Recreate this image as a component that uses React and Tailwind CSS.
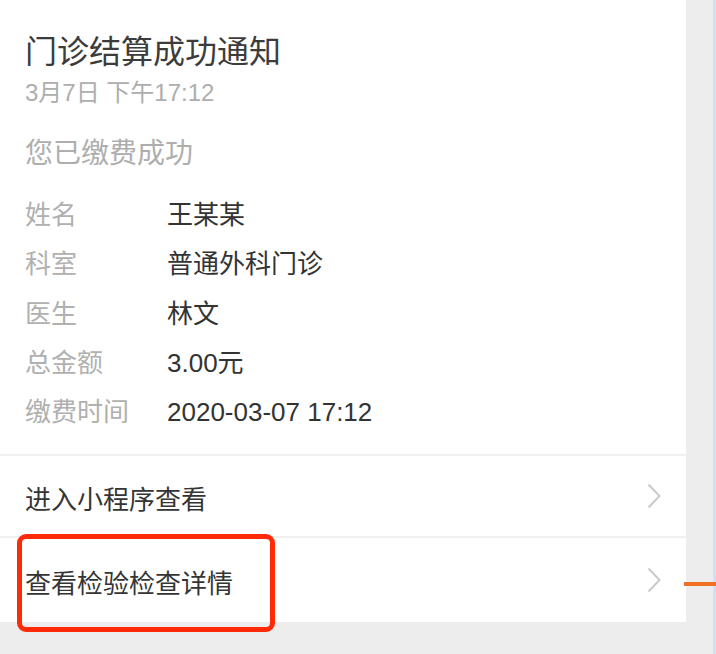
const FONT = { fontFamily: '"Liberation Sans", "Noto Sans CJK SC", sans-serif' };

const info = [
  ['姓名', '王某某'],
  ['科室', '普通外科门诊'],
  ['医生', '林文'],
  ['总金额', '3.00元'],
  ['缴费时间', '2020-03-07 17:12'],
];

function Chevron() {
  return (
    <svg width="14" height="26" viewBox="0 0 14 26" fill="none" className="shrink-0">
      <polyline points="1.5,1.5 12.5,13 1.5,24.5" stroke="#cacaca" strokeWidth="2" />
    </svg>
  );
}

function LinkRow({ label, h }) {
  return (
    <div className={`flex items-center justify-between pl-[25px] pr-[25px] ${h}`}>
      <span className="pt-[8px] text-[26px] leading-[34px] text-[#353535]">{label}</span>
      <Chevron />
    </div>
  );
}

export default function App() {
  return (
    <div className="relative flex h-[654px] w-[716px] overflow-hidden bg-[#ededed]" style={FONT}>
      <div className="flex h-[622px] w-[686px] flex-col bg-white">
        <div className="px-[25px] pt-[30px]">
          <div className="text-[32px] leading-[44px] text-[#3c3c3c]">门诊结算成功通知</div>
          <div className="mt-[4px] text-[24px] leading-[30px] text-[#aeaeae]">3月7日 下午17:12</div>
          <div className="mt-[28px] text-[28px] leading-[36px] text-[#aeaeae]">您已缴费成功</div>
          <div className="mt-[19px] flex flex-col">
            {info.map(([k, v]) => (
              <div key={k} className="flex h-[49.25px] items-center text-[26px]">
                <span className="w-[142px] text-[#b0b0b0]">{k}</span>
                <span className="text-[#333333]">{v}</span>
              </div>
            ))}
          </div>
        </div>
        <div className="mt-auto h-[2px] bg-[#f0f0f0]" />
        <LinkRow label="进入小程序查看" h="h-[80px]" />
        <div className="h-[2px] bg-[#f0f0f0]" />
        <LinkRow label="查看检验检查详情" h="h-[84px]" />
      </div>
      <div className="flex-1" />
      <div className="w-[3px] bg-[#cde1f9]" />
      <div className="absolute left-[684px] top-[582px] h-[4px] w-[32px] bg-[#f07026]" />
      <div className="absolute left-[17px] top-[534px] h-[98px] w-[258px] rounded-[9px] border-[5px] border-[#ff2a08]" />
    </div>
  );
}
